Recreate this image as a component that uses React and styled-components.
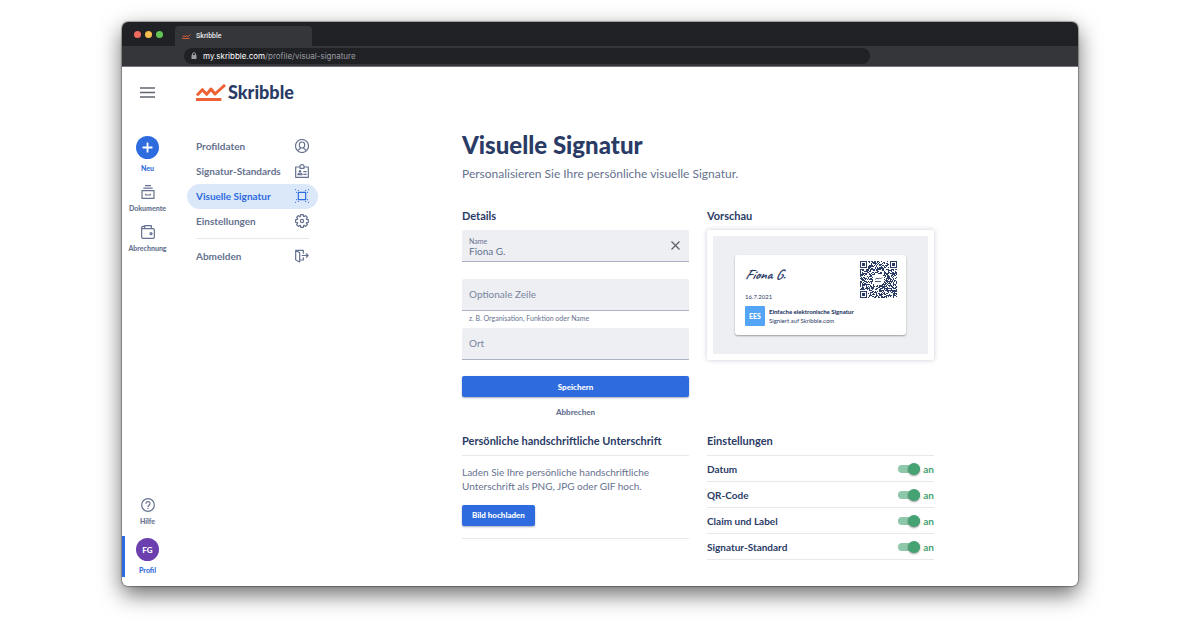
import React, { useState } from "react";
import styled, { createGlobalStyle } from "styled-components";

const navy = "#2a3b66";
const slate = "#66728f";
const blue = "#2e6bde";
const green = "#45a273";
const line = "#e6e8ed";
const field = "#edeff3";

const GlobalStyle = createGlobalStyle`
  * {
    box-sizing: border-box;
  }

  body {
    margin: 0;
    background: #ffffff;
    color: ${navy};
    font-family: Lato, "Liberation Sans", sans-serif;
  }

  button, input {
    font-family: inherit;
  }
`;

const Page = styled.div`
  display: flex;
  min-height: 100vh;
  padding: 22px 122px 42px;
`;

// browser window
const Browser = styled.div`
  flex: 1;
  display: flex;
  flex-direction: column;
  border-radius: 6px;
  overflow: hidden;
  background: #ffffff;
  box-shadow: 0 0 1px 1px rgba(0, 0, 0, 0.3), 0 8px 22px rgba(0, 0, 0, 0.6);
`;

const TabStrip = styled.div`
  display: flex;
  align-items: flex-end;
  height: 24px;
  padding-left: 12px;
  background: #202125;
`;

const Lights = styled.div`
  display: flex;
  gap: 4px;
  width: 41px;
  padding-bottom: 8px;
`;

const Light = styled.span`
  width: 7px;
  height: 7px;
  border-radius: 50%;
  background: ${(props) => props.color};
`;

const Tab = styled.div`
  display: flex;
  align-items: center;
  gap: 5px;
  width: 137px;
  height: 20px;
  padding-left: 7px;
  border-radius: 4px 4px 0 0;
  background: #35363a;
  color: #e9eaec;
  font: 500 7px Roboto, sans-serif;
`;

const Toolbar = styled.div`
  display: flex;
  align-items: center;
  height: 21px;
  padding: 0 208px 0 62px;
  border-bottom: 1px solid #77787b;
  background: #35363a;
`;

const Address = styled.div`
  flex: 1;
  display: flex;
  align-items: center;
  gap: 6px;
  height: 16px;
  padding-left: 7px;
  border-radius: 8px;
  background: #202125;
  color: #9a9da1;
  font: 8px Inter, sans-serif;

  b {
    color: #ffffff;
    font-weight: 400;
  }
`;

// application
const AppLayout = styled.div`
  flex: 1;
  display: grid;
  grid-template-columns: 51px 1fr;
  grid-template-rows: 50px 1fr;
`;

const MenuButton = styled.button`
  display: flex;
  align-items: center;
  justify-content: center;
  padding: 0;
  border: 0;
  background: none;
`;

const Brand = styled.a`
  display: flex;
  align-items: center;
  gap: 2px;
  padding-left: 23px;
  color: ${navy};
  font-size: 18px;
  font-weight: 900;
  text-decoration: none;
`;

const Rail = styled.nav`
  display: flex;
  flex-direction: column;
  justify-content: space-between;
  padding: 19px 0 9px;
`;

const RailFooter = styled.div`
  display: grid;
  gap: 6px;
`;

const RailLink = styled.a`
  display: flex;
  flex-direction: column;
  align-items: center;
  gap: 5px;
  height: ${(props) => (props.$tall ? "41px" : "40px")};
  padding-top: ${(props) => (props.$tall ? (props.$current ? "2px" : "0") : "8px")};
  border-left: 3px solid ${(props) => (props.$current ? blue : "transparent")};
  border-right: 3px solid transparent;
  color: ${(props) => (props.$accent ? blue : slate)};
  font-size: 7px;
  font-weight: 900;
  line-height: 8px;
  text-decoration: none;
  white-space: nowrap;

  svg {
    flex: none;
  }
`;

const RoundBadge = styled.span`
  flex: none;
  display: flex;
  align-items: center;
  justify-content: center;
  width: 23px;
  height: 23px;
  border-radius: 50%;
  background: ${(props) => props.color};
  color: #ffffff;
  font-size: 8px;
`;

const Body = styled.div`
  display: grid;
  grid-template-columns: 131px minmax(0, 1fr);
  padding-left: 14px;
`;

const SideNav = styled.nav`
  padding-top: 17px;
`;

const SideLink = styled.a`
  display: flex;
  align-items: center;
  justify-content: space-between;
  height: 25px;
  padding: 0 9px 2px;
  border-radius: 13px;
  background: ${(props) => (props.$active ? "#dbe8fa" : "transparent")};
  color: ${(props) => (props.$active ? blue : slate)};
  font-size: 10px;
  font-weight: 700;
  line-height: 14px;
  text-decoration: none;
`;

const SideRule = styled.hr`
  margin: 4px 9px 5px;
  border: 0;
  border-top: 1px solid ${line};
`;

const Main = styled.main`
  width: 100%;
  max-width: 472px;
  margin: 0 auto;
  padding-top: 12px;
`;

const Title = styled.h1`
  margin: 0;
  font-size: 24px;
  font-weight: 900;
  line-height: 32px;
`;

const Lead = styled.p`
  margin: 5px 0 27px;
  color: ${slate};
  font-size: 12px;
  line-height: 16px;
`;

const Columns = styled.div`
  display: grid;
  grid-template-columns: 1fr 1fr;
  column-gap: 18px;
`;

const Heading = styled.h2`
  margin: 0;
  font-size: 11px;
  font-weight: 700;
  line-height: 14px;
`;

const Form = styled.form`
  display: flex;
  flex-direction: column;
  padding-top: 7px;
`;

const FieldBox = styled.div`
  display: flex;
  align-items: center;
  height: 32px;
  padding: 0 7px;
  border-bottom: 1px solid #abb1c7;
  border-radius: 2px 2px 0 0;
  background: ${field};
`;

const FieldLabel = styled.label`
  flex: 1;
  display: flex;
  flex-direction: column;
  padding-top: 3px;
  color: ${slate};
  font-size: 7px;
  line-height: 8px;
`;

const TextInput = styled.input`
  width: 100%;
  padding: 0;
  border: 0;
  outline: 0;
  background: none;
  color: ${slate};
  font-size: 10px;
  line-height: 13px;

  &::placeholder {
    color: #7a859f;
    opacity: 1;
  }
`;

const FieldGap = styled.div`
  height: ${(props) => props.$height}px;
`;

const Hint = styled.small`
  height: 17px;
  padding-left: 7px;
  color: ${slate};
  font-size: 7px;
  line-height: 15px;
`;

const ClearButton = styled.button`
  display: flex;
  padding: 2px;
  border: 0;
  background: none;
`;

const Button = styled.button`
  height: 21px;
  padding: 0 9px;
  border: 0;
  border-radius: 2px;
  background: ${blue};
  box-shadow: 0 1px 2px rgba(30, 50, 100, 0.4);
  color: #ffffff;
  font-size: 8px;
  font-weight: 900;
`;

const UploadButton = styled(Button)`
  padding: 0 10px;
`;

const PlainButton = styled(Button)`
  margin-top: 4px;
  background: none;
  box-shadow: none;
  color: ${slate};
`;

const Preview = styled.div`
  margin-top: 7px;
  padding: 6px;
  border-radius: 2px;
  background: #ffffff;
  box-shadow: 0 0 5px rgba(42, 59, 102, 0.25);
`;

const PreviewArea = styled.div`
  display: flex;
  justify-content: center;
  padding: 19px 22px;
  background: ${field};
`;

const SignatureCard = styled.div`
  flex: 1;
  display: grid;
  grid-template-columns: 1fr auto;
  align-content: start;
  height: 80px;
  padding: 6px 9px 0 10px;
  border-radius: 3px;
  background: #ffffff;
  box-shadow: 0 1px 2px rgba(0, 0, 0, 0.35);
`;

const SignedBy = styled.div`
  padding-top: 5px;
  font-family: Caveat, cursive;
  font-size: 14px;
  font-weight: 700;
  font-style: italic;
  line-height: 18px;
`;

const SignedDate = styled.div`
  padding-top: 10px;
  font-family: Lato, sans-serif;
  font-size: 6px;
  font-weight: 400;
  font-style: normal;
  line-height: 6px;
`;

const Claim = styled.div`
  grid-column: 1 / -1;
  display: flex;
  align-items: center;
  gap: 4px;
  padding-top: 6px;
  font-size: 6px;
  line-height: 9px;
  white-space: nowrap;

  strong {
    display: block;
    font-weight: 900;
  }
`;

const Standard = styled.span`
  width: 20px;
  border-radius: 1px;
  background: #54a5f5;
  color: #ffffff;
  font-size: 7px;
  font-weight: 900;
  line-height: 20px;
  text-align: center;
`;

const LowerColumns = styled(Columns)`
  margin-top: 12px;
`;

const Upload = styled.div`
  margin-top: 7px;
  padding: 9px 0 12px;
  border-top: 1px solid ${line};
  border-bottom: 1px solid ${line};
`;

const UploadText = styled.p`
  margin: 0 0 9px;
  color: ${slate};
  font-size: 10px;
  line-height: 14px;
`;

const Settings = styled.div`
  margin-top: 7px;
  border-top: 1px solid ${line};
`;

const SettingRow = styled.label`
  display: flex;
  align-items: center;
  justify-content: space-between;
  height: 26px;
  border-bottom: 1px solid ${line};
  font-size: 10px;
  font-weight: 700;
`;

const SwitchState = styled.span`
  display: flex;
  align-items: center;
  gap: 3px;
  color: ${(props) => (props.$on ? green : slate)};
`;

const Switch = styled.input`
  appearance: none;
  display: flex;
  align-items: center;
  justify-content: flex-start;
  width: 22px;
  height: 8px;
  margin: 0;
  border-radius: 4px;
  background: #c4c9d4;

  &::before {
    content: "";
    width: 12px;
    height: 12px;
    flex: none;
    border-radius: 50%;
    background: #ffffff;
    box-shadow: 0 1px 2px rgba(0, 0, 0, 0.4);
  }

  &:checked {
    justify-content: flex-end;
    background: #8fc7aa;
  }

  &:checked::before {
    background: ${green};
  }
`;

// icons
const Icon = ({ children, size = 14 }) => (
  <svg
    width={size}
    height={size}
    viewBox="0 0 42 42"
    fill="none"
    stroke="currentColor"
    strokeWidth="3.6"
    strokeLinejoin="round"
    aria-hidden="true"
  >
    {children}
  </svg>
);

const Scribble = ({ width, height }) => (
  <svg width={width} height={height} viewBox="0 0 90 51" aria-hidden="true">
    <path
      d="M3 34 L19 17 L32 31 L45 15 L57 30 L87 3"
      fill="none"
      stroke="#ee6036"
      strokeWidth="9"
      strokeLinejoin="round"
    />
    <path d="M0 46.500H76" stroke="#ee6036" strokeWidth="9" />
  </svg>
);

const UserIcon = () => (
  <Icon>
    <circle cx="21" cy="21" r="19.5" />
    <path d="M21 9c-5 0-8 4-8 8 0 5 3 10 8 10s8-5 8-10c0-4-3-8-8-8zM8 35c2-5 8-4 9-9M34 35c-2-5-8-4-9-9" />
  </Icon>
);

const BadgeIcon = () => (
  <Icon>
    <path d="M15 9H2v31h38V9H27M15 13V6q0-4 6-4t6 4v7z" />
    <circle cx="15" cy="22" r="2" />
    <path d="M9 32v-2q0-3 6-3t6 3v2zM25 23h10M25 31h10" />
  </Icon>
);

const FrameIcon = () => (
  <Icon>
    <rect x="10" y="10" width="22" height="22" />
    <path
      d="M3 10h3M36 10h3M3 32h3M36 32h3M10 3v3M32 3v3M10 36v3M32 36v3M0 2h3M39 2h3M0 40h3M39 40h3"
      strokeWidth="3"
    />
  </Icon>
);

const gearPath = () => {
  const steps = 8;
  const parts = [];
  for (let i = 0; i < steps; i++) {
    const points = [
      [-0.32, 14.5],
      [-0.2, 19.5],
      [0.2, 19.5],
      [0.32, 14.5],
    ].map(([offset, radius]) => {
      const angle = (i * 2 * Math.PI) / steps + offset;
      return `${(21 + radius * Math.sin(angle)).toFixed(1)} ${(21 - radius * Math.cos(angle)).toFixed(1)}`;
    });
    parts.push(points.join("L"));
  }
  return `M${parts.join("L")}Z`;
};

const GearIcon = () => (
  <Icon>
    <path d={gearPath()} />
    <circle cx="21" cy="21" r="5" />
  </Icon>
);

const ExitIcon = () => (
  <Icon>
    <path d="M25 14V4H2v29h0M25 25v8H14M2 4l12 7v28L2 33M20 19.500h20M33 13l6.500 6.500L33 26" />
  </Icon>
);

const ArchiveIcon = () => (
  <Icon>
    <path d="M3 17h36v23H3zM7 9.500h28M12 2h18M14 26v4h14v-4" />
  </Icon>
);

const WalletIcon = () => (
  <Icon>
    <path d="M2 9v28q0 3 4 3h30q4 0 4-3V14q0-3-4-3H6q-4 0-4-3 0-4 4-4h6M11 11V2h20v9" />
    <circle cx="30" cy="26" r="3" />
  </Icon>
);

const HelpIcon = () => (
  <Icon>
    <circle cx="21" cy="21" r="19" />
    <path d="M15 17c0-9 13-8 12 0 0 5-6 4-6 10M21 29.500v3.500" />
  </Icon>
);

// QR code, 37 x 37 modules with a free spot for the logo
const QR_SIZE = 37;

const qrPath = () => {
  let seed = 20210716;
  let path = "";
  const inFinder = (x, y) =>
    (x < 8 && y < 8) || (x > 28 && y < 8) || (x < 8 && y > 28);
  for (let y = 0; y < QR_SIZE; y++) {
    for (let x = 0; x < QR_SIZE; x++) {
      seed = (seed * 1103515245 + 12345) % 2147483648;
      const inLogo = Math.hypot(x - 18, y - 18) < 6;
      if (!inFinder(x, y) && !inLogo && seed / 2147483648 > 0.45) {
        path += `M${x} ${y}h1v1h-1z`;
      }
    }
  }
  return path;
};

const QrCode = () => (
  <svg width="37" height="37" viewBox="0 0 37 37" aria-hidden="true">
    <path d={qrPath()} fill={navy} />
    {[[0, 0], [30, 0], [0, 30]].map(([x, y]) => (
      <g key={`${x}-${y}`} fill={navy}>
        <rect x={x + 0.5} y={y + 0.5} width="6" height="6" fill="none" stroke={navy} />
        <rect x={x + 2} y={y + 2} width="3" height="3" />
      </g>
    ))}
    <path
      d="M15 18.500l2-1.500 1 1 1.500-1 1 1 1.500-1.500M15 20.500h6"
      fill="none"
      stroke={navy}
      strokeWidth="0.800"
    />
  </svg>
);

const sideLinks = [
  { label: "Profildaten", icon: <UserIcon /> },
  { label: "Signatur-Standards", icon: <BadgeIcon /> },
  { label: "Visuelle Signatur", icon: <FrameIcon />, active: true },
  { label: "Einstellungen", icon: <GearIcon /> },
];

const Setting = ({ label }) => {
  const [on, setOn] = useState(true);
  return (
    <SettingRow>
      {label}
      <SwitchState $on={on}>
        <Switch
          type="checkbox"
          role="switch"
          checked={on}
          onChange={() => setOn(!on)}
        />
        {on ? "an" : "aus"}
      </SwitchState>
    </SettingRow>
  );
};

const BrowserBar = () => (
  <>
    <TabStrip>
      <Lights>
        <Light color="#ee6a5f" />
        <Light color="#f5bd4f" />
        <Light color="#61c454" />
      </Lights>
      <Tab>
        <Scribble width={9} height={5} />
        Skribble
      </Tab>
    </TabStrip>
    <Toolbar>
      <Address>
        <svg width="6" height="8" viewBox="0 0 6 8" aria-hidden="true">
          <rect x="0.500" y="3" width="5" height="4" rx="0.500" fill="#9a9da1" />
          <path d="M1.500 3V2q0-1.200 1.500-1.200T4.500 2v1" fill="none" stroke="#9a9da1" />
        </svg>
        <span>
          <b>my.skribble.com</b>/profile/visual-signature
        </span>
      </Address>
    </Toolbar>
  </>
);

const DetailsForm = () => {
  const [name, setName] = useState("Fiona G.");
  return (
    <Form onSubmit={(event) => event.preventDefault()}>
      <FieldBox>
        <FieldLabel>
          Name
          <TextInput
            value={name}
            onChange={(event) => setName(event.target.value)}
          />
        </FieldLabel>
        <ClearButton
          type="button"
          aria-label="Name löschen"
          onClick={() => setName("")}
        >
          <svg width="9" height="9" viewBox="0 0 9 9" aria-hidden="true">
            <path d="M0.500 0.500l8 8M8.500 0.500l-8 8" stroke="#5c6069" strokeWidth="1.200" />
          </svg>
        </ClearButton>
      </FieldBox>
      <FieldGap $height={17} />
      <FieldBox>
        <TextInput placeholder="Optionale Zeile" aria-label="Optionale Zeile" />
      </FieldBox>
      <Hint>z. B. Organisation, Funktion oder Name</Hint>
      <FieldBox>
        <TextInput placeholder="Ort" aria-label="Ort" />
      </FieldBox>
      <FieldGap $height={16} />
      <Button type="submit">Speichern</Button>
      <PlainButton type="button">Abbrechen</PlainButton>
    </Form>
  );
};

function App() {
  return (
    <>
      <GlobalStyle />
      <Page>
        <Browser>
          <BrowserBar />
          <AppLayout>
            <MenuButton aria-label="Menü">
              <svg width="15" height="11" viewBox="0 0 15 11" aria-hidden="true">
                <path d="M0 1h15M0 5.500h15M0 10h15" stroke="#62666f" strokeWidth="1.300" />
              </svg>
            </MenuButton>
            <Brand href="#">
              <Scribble width={30} height={17} />
              Skribble
            </Brand>
            <Rail>
              <div>
                <RailLink href="#" $accent $tall>
                  <RoundBadge color={blue}>
                    <svg width="11" height="11" viewBox="0 0 11 11" aria-hidden="true">
                      <path d="M5.500 0.500v10M0.500 5.500h10" stroke="#fff" strokeWidth="1.800" />
                    </svg>
                  </RoundBadge>
                  Neu
                </RailLink>
                <RailLink href="#">
                  <ArchiveIcon />
                  Dokumente
                </RailLink>
                <RailLink href="#">
                  <WalletIcon />
                  Abrechnung
                </RailLink>
              </div>
              <RailFooter>
                <RailLink href="#">
                  <HelpIcon />
                  Hilfe
                </RailLink>
                <RailLink href="#" $accent $tall $current>
                  <RoundBadge color="#6b3fae">FG</RoundBadge>
                  Profil
                </RailLink>
              </RailFooter>
            </Rail>
            <Body>
              <SideNav>
                {sideLinks.map(({ label, icon, active }) => (
                  <SideLink key={label} href="#" $active={active}>
                    {label}
                    {icon}
                  </SideLink>
                ))}
                <SideRule />
                <SideLink href="#">
                  Abmelden
                  <ExitIcon />
                </SideLink>
              </SideNav>
              <Main>
                <Title>Visuelle Signatur</Title>
                <Lead>Personalisieren Sie Ihre persönliche visuelle Signatur.</Lead>
                <Columns>
                  <section>
                    <Heading>Details</Heading>
                    <DetailsForm />
                  </section>
                  <section>
                    <Heading>Vorschau</Heading>
                    <Preview>
                      <PreviewArea>
                        <SignatureCard>
                          <SignedBy>
                            Fiona G.
                            <SignedDate>16.7.2021</SignedDate>
                          </SignedBy>
                          <QrCode />
                          <Claim>
                            <Standard>EES</Standard>
                            <span>
                              <strong>Einfache elektronische Signatur</strong>
                              Signiert auf Skribble.com
                            </span>
                          </Claim>
                        </SignatureCard>
                      </PreviewArea>
                    </Preview>
                  </section>
                </Columns>
                <LowerColumns>
                  <section>
                    <Heading>Persönliche handschriftliche Unterschrift</Heading>
                    <Upload>
                      <UploadText>
                        Laden Sie Ihre persönliche handschriftliche
                        Unterschrift als PNG, JPG oder GIF hoch.
                      </UploadText>
                      <UploadButton type="button">Bild hochladen</UploadButton>
                    </Upload>
                  </section>
                  <section>
                    <Heading>Einstellungen</Heading>
                    <Settings>
                      <Setting label="Datum" />
                      <Setting label="QR-Code" />
                      <Setting label="Claim und Label" />
                      <Setting label="Signatur-Standard" />
                    </Settings>
                  </section>
                </LowerColumns>
              </Main>
            </Body>
          </AppLayout>
        </Browser>
      </Page>
    </>
  );
}

export default App;
